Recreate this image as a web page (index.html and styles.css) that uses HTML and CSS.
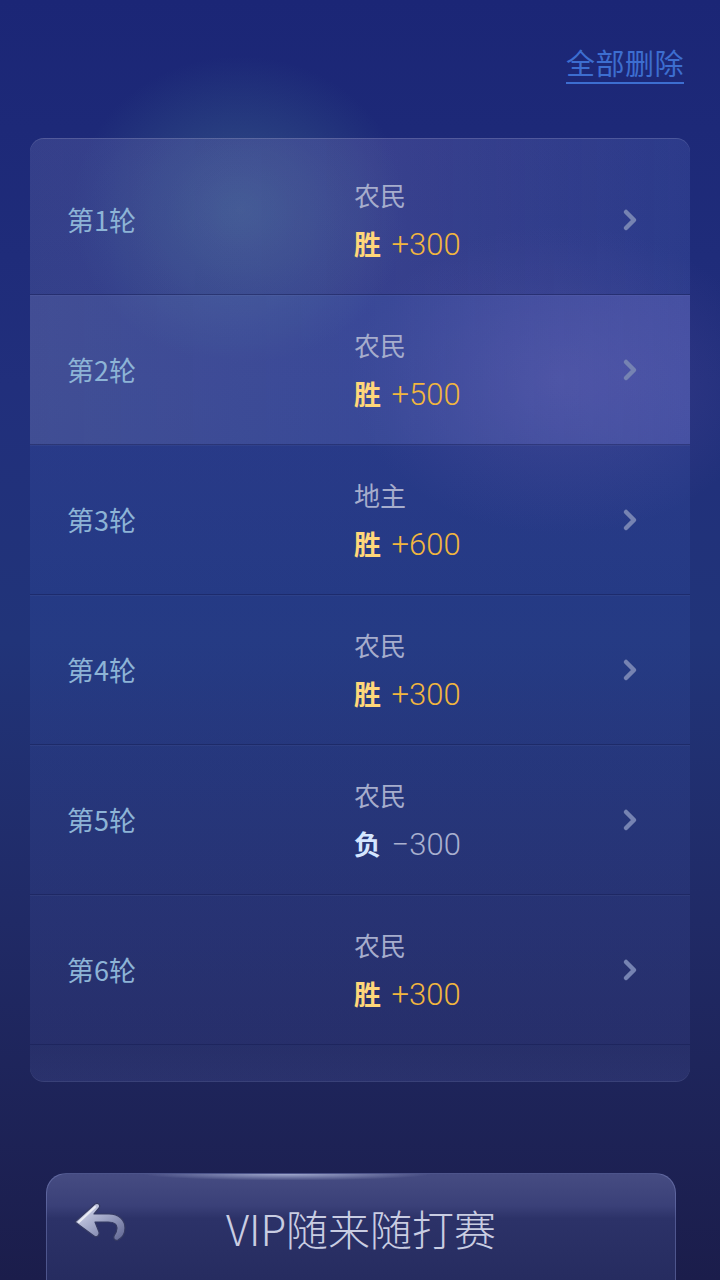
FILE: index.html
```html
<!DOCTYPE html>
<html lang="zh-CN">
<head>
<meta charset="utf-8">
<title>VIP随来随打赛</title>
<link rel="stylesheet" href="styles.css">
</head>
<body>
<div class="screen">
  <div class="topbar">
    <a class="clear-all" href="#">全部删除</a>
  </div>

  <div class="rounds">
    <div class="round first">
      <div class="round-name">第1轮</div>
      <div class="round-info">
        <div class="role">农民</div>
        <div class="result win"><b>胜</b> +300</div>
      </div>
      <svg class="chev" viewBox="0 0 16 24"><path d="M4 4 L12 12 L4 20" /></svg>
    </div>
    <div class="round active">
      <div class="round-name">第2轮</div>
      <div class="round-info">
        <div class="role">农民</div>
        <div class="result win"><b>胜</b> +500</div>
      </div>
      <svg class="chev" viewBox="0 0 16 24"><path d="M4 4 L12 12 L4 20" /></svg>
    </div>
    <div class="round">
      <div class="round-name">第3轮</div>
      <div class="round-info">
        <div class="role">地主</div>
        <div class="result win"><b>胜</b> +600</div>
      </div>
      <svg class="chev" viewBox="0 0 16 24"><path d="M4 4 L12 12 L4 20" /></svg>
    </div>
    <div class="round">
      <div class="round-name">第4轮</div>
      <div class="round-info">
        <div class="role">农民</div>
        <div class="result win"><b>胜</b> +300</div>
      </div>
      <svg class="chev" viewBox="0 0 16 24"><path d="M4 4 L12 12 L4 20" /></svg>
    </div>
    <div class="round">
      <div class="round-name">第5轮</div>
      <div class="round-info">
        <div class="role">农民</div>
        <div class="result lose"><b>负</b> −300</div>
      </div>
      <svg class="chev" viewBox="0 0 16 24"><path d="M4 4 L12 12 L4 20" /></svg>
    </div>
    <div class="round">
      <div class="round-name">第6轮</div>
      <div class="round-info">
        <div class="role">农民</div>
        <div class="result win"><b>胜</b> +300</div>
      </div>
      <svg class="chev" viewBox="0 0 16 24"><path d="M4 4 L12 12 L4 20" /></svg>
    </div>
    <div class="rounds-foot"></div>
  </div>

  <div class="titlebar">
    <svg class="back" viewBox="0 0 60 50">
      <defs>
        <linearGradient id="bk" x1="0" y1="0" x2="1" y2="1">
          <stop offset="0" stop-color="#dfe2f4"/>
          <stop offset="0.5" stop-color="#9fa5c6"/>
          <stop offset="1" stop-color="#5d6390"/>
        </linearGradient>
      </defs>
      <!-- thick left arrow whose tail curls down on the right -->
      <path d="M4 24 L24 6 C27 4 30 7 28 10 L23 16 L38 16 C48 16 54 22 54 30 C54 36 51 40 47 42 C44 43 42 41 43 38 C45 35 46 33 46 30 C46 26 42 24 37 24 L24 24 L28 34 C29 38 25 40 23 38 Z" fill="url(#bk)" stroke="#353a62" stroke-width="1.2" stroke-linejoin="round"/>
      <path d="M8 24 L24 9" stroke="rgba(255,255,255,0.7)" stroke-width="2" stroke-linecap="round" fill="none"/>
    </svg>
    <div class="title">VIP随来随打赛</div>
  </div>
</div>
</body>
</html>
```

FILE: styles.css
```css
html, body {
  margin: 0;
  padding: 0;
}

body {
  width: 720px;
  height: 1280px;
  overflow: hidden;
  font-family: "Noto Sans CJK SC", "Noto Sans", Roboto, sans-serif;
  background: #1c1f52;
}

.screen {
  width: 720px;
  height: 1280px;
  display: flex;
  flex-direction: column;
  background:
    radial-gradient(ellipse 240px 220px at 240px 210px, rgba(70, 120, 150, 0.5), rgba(70, 120, 150, 0) 70%),
    radial-gradient(ellipse 300px 220px at 560px 380px, rgba(110, 90, 170, 0.3), rgba(110, 90, 170, 0) 70%),
    linear-gradient(180deg, #1b2676 0%, #212f7c 30%, #213479 50%, #202a66 72%, #1b1d4b 100%);
}

.topbar {
  height: 138px;
  display: flex;
  justify-content: flex-end;
  align-items: flex-start;
  padding-right: 36px;
  box-sizing: border-box;
}

.clear-all {
  margin-top: 42px;
  font-size: 29px;
  line-height: 40px;
  color: #3d6ed0;
  text-decoration: none;
  border-bottom: 2px solid #3d6ed0;
  letter-spacing: 0.5px;
}

.rounds {
  margin: 0 30px;
  height: 943px;
  border-radius: 14px;
  overflow: hidden;
  display: flex;
  flex-direction: column;
  background: linear-gradient(180deg, rgba(100, 120, 200, 0.2) 0%, rgba(60, 100, 200, 0.14) 50%, rgba(80, 90, 170, 0.18) 100%);
  box-shadow: inset 0 1px 0 rgba(255, 255, 255, 0.12), 0 1px 0 rgba(140, 150, 210, 0.25);
}

.round {
  height: 150px;
  flex: none;
  display: flex;
  align-items: center;
  box-sizing: border-box;
  border-bottom: 1px solid rgba(20, 26, 80, 0.45);
  box-shadow: inset 0 1px 0 rgba(255, 255, 255, 0.04);
}

.round.first {
  height: 157px;
  padding-top: 7px;
  background: linear-gradient(90deg, rgba(120, 110, 150, 0.12), rgba(140, 110, 170, 0.14) 50%, rgba(60, 90, 180, 0.05));
}

.round.active {
  background: linear-gradient(90deg, rgba(150, 150, 190, 0.22), rgba(130, 140, 220, 0.18) 55%, rgba(140, 140, 230, 0.26));
}

.round-name {
  width: 324px;
  padding-left: 37px;
  box-sizing: border-box;
  font-size: 27px;
  color: #8db4d6;
}

.round-info {
  flex: 1;
  display: flex;
  flex-direction: column;
  gap: 10px;
  padding-top: 4px;
}

.role {
  font-size: 26px;
  line-height: 36px;
  color: #a6adcc;
}

.result {
  font-size: 31px;
  line-height: 42px;
  font-family: Roboto, "Noto Sans CJK SC", sans-serif;
  font-weight: 300;
}

.result b {
  font-family: "Noto Sans CJK SC", sans-serif;
  font-weight: 700;
  font-size: 27px;
  margin-right: 3px;
}

.result.win {
  color: #f2b63e;
}

.result.win b {
  color: #ffd77a;
}

.result.lose {
  color: #a9b0cf;
}

.result.lose b {
  color: #d4e6ff;
}

.chev {
  width: 16px;
  height: 24px;
  margin-right: 52px;
}

.chev path {
  fill: none;
  stroke: #7683b2;
  stroke-width: 4.5;
  stroke-linecap: round;
  stroke-linejoin: round;
}

.rounds-foot {
  flex: 1;
  background: linear-gradient(180deg, rgba(40, 50, 100, 0.2), rgba(60, 70, 130, 0.15));
}

.titlebar {
  margin: 92px 44px 0 46px;
  flex: 1;
  border-radius: 20px 20px 0 0;
  border: 1px solid rgba(150, 160, 220, 0.35);
  border-bottom: none;
  display: flex;
  align-items: flex-start;
  background:
    radial-gradient(ellipse 180px 8px at 240px 0, rgba(220, 230, 255, 0.6), rgba(220, 230, 255, 0) 80%),
    linear-gradient(180deg, #464c82 0%, #3a4078 30%, #2c3268 42%, #262c60 100%);
}

.back {
  width: 60px;
  height: 50px;
  margin: 24px 0 0 24px;
  flex: none;
}

.title {
  flex: 1;
  text-align: center;
  margin: 28px 84px 0 0;
  font-size: 42px;
  line-height: 52px;
  color: #c9cde2;
  font-family: "Noto Sans CJK SC", sans-serif;
  font-weight: 300;
}
```
